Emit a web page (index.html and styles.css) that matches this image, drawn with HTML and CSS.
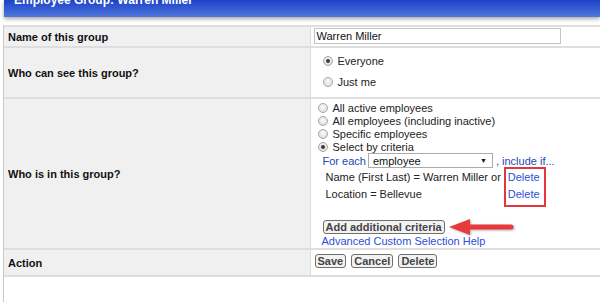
FILE: index.html
```html
<!DOCTYPE html>
<html>
<head>
<meta charset="utf-8">
<link rel="stylesheet" href="styles.css">
</head>
<body>
<div class="page">
  <div class="titlebar"><h1>Employee Group: Warren Miller</h1></div>
  <div class="sheet">
    <table class="form">
      <colgroup><col class="c1"><col class="c2"></colgroup>
      <tr class="r1">
        <th>Name of this group</th>
        <td class="v1"><span class="textbox">Warren Miller</span></td>
      </tr>
      <tr class="r2">
        <th>Who can see this group?</th>
        <td class="v2">
          <div class="opt big"><span class="radio on"></span>Everyone</div>
          <div class="opt big"><span class="radio"></span>Just me</div>
        </td>
      </tr>
      <tr class="r3">
        <th>Who is in this group?</th>
        <td class="v3">
          <div class="opt"><span class="radio"></span>All active employees</div>
          <div class="opt"><span class="radio"></span>All employees (including inactive)</div>
          <div class="opt"><span class="radio"></span>Specific employees</div>
          <div class="opt"><span class="radio on"></span>Select by criteria</div>
          <div class="foreach">
            <span class="blue">For each</span>
            <span class="select"><span>employee</span><span class="caret">&#9660;</span></span>
            <span class="blue">, include if...</span>
          </div>
          <div class="criteria">
            <div class="crit-text">
              <div class="cline">Name (First Last) = Warren Miller or</div>
              <div class="cline">Location = Bellevue</div>
            </div>
            <div class="delbox">
              <a class="link cline">Delete</a>
              <a class="link cline">Delete</a>
            </div>
          </div>
          <div class="addrow">
            <span class="btn">Add additional criteria</span>
            <svg class="arrow" width="70" height="20" viewBox="0 0 70 20">
              <line x1="18" y1="10" x2="64" y2="10" stroke="#e8393d" stroke-width="5" stroke-linecap="round"/>
              <polygon points="2,10 23,2 23,18" fill="#e8393d"/>
            </svg>
          </div>
          <a class="link help">Advanced Custom Selection Help</a>
        </td>
      </tr>
      <tr class="r4">
        <th>Action</th>
        <td class="v4">
          <span class="btn">Save</span>
          <span class="btn">Cancel</span>
          <span class="btn">Delete</span>
        </td>
      </tr>
    </table>
  </div>
</div>
</body>
</html>
```
FILE: styles.css
```css
html, body {
  margin: 0;
  background: #fff;
}
body {
  font-family: "Liberation Sans", Arial, sans-serif;
  font-size: 11px;
  color: #1a1a1a;
}
.titlebar {
  margin-left: 4px;
  height: 17px;
  background: linear-gradient(#1c42c8, #4e76db);
  box-shadow: 0 2px 4px rgba(0, 0, 0, 0.35);
  overflow: hidden;
}
.titlebar h1 {
  margin: -6px 0 0 10px;
  font-size: 12px;
  line-height: 12px;
  font-weight: bold;
  color: #fff;
}
.sheet {
  margin-top: 8px;
  margin-left: 3px;
  border-left: 1px solid #c8c8c8;
  min-height: 290px;
}
table.form {
  border-collapse: collapse;
  table-layout: fixed;
  width: 596px;
}
col.c1 { width: 306px; }
table.form tr {
  border-top: 2px solid #dedede;
  border-bottom: 2px solid #dedede;
}
table.form th {
  background: #f0f0f0;
  text-align: left;
  font-weight: bold;
  color: #111;
  padding: 0 0 0 4px;
  border-right: 1px solid #dcdcdc;
  vertical-align: middle;
}
table.form td {
  padding: 0;
  vertical-align: top;
  background: #fff;
}
.r1 th, .r1 td { height: 18px; }
.r2 th, .r2 td { height: 47px; }
.r3 th, .r3 td { height: 147px; }
.r4 th, .r4 td { height: 21px; }

.v1 { padding: 1px 0 0 3px !important; }
.textbox {
  display: block;
  box-sizing: border-box;
  width: 247px;
  height: 16px;
  border: 1px solid #c4c4c4;
  padding: 0 2px;
  line-height: 14px;
  color: #111;
}

.opt {
  display: flex;
  align-items: center;
  height: 13px;
  color: #222;
}
.opt.big { height: 21px; }
.radio {
  box-sizing: border-box;
  width: 10px;
  height: 10px;
  border-radius: 50%;
  border: 1px solid #a9a9a9;
  background: radial-gradient(circle at 50% 40%, #fbfbfb 0%, #e4e4e4 60%, #cfcfcf 100%);
  margin-right: 5px;
  position: relative;
  flex: none;
}
.radio.on::after {
  content: "";
  position: absolute;
  left: 2px;
  top: 2px;
  width: 4px;
  height: 4px;
  border-radius: 50%;
  background: #3a3a3a;
}
.v2 { padding: 2px 0 0 12px !important; }
.v3 { padding: 2px 0 0 7px !important; }

.foreach {
  display: flex;
  align-items: center;
  height: 15px;
  margin-left: 5px;
}
.blue { color: #2446b4; }
.select {
  box-sizing: border-box;
  display: flex;
  align-items: center;
  justify-content: space-between;
  width: 125px;
  height: 15px;
  margin: 0 3px 0 2px;
  padding: 0 5px 0 4px;
  border: 1px solid #ababab;
  background: #fff;
  color: #111;
}
.caret {
  font-size: 7px;
  color: #111;
}
.criteria {
  display: flex;
  margin-left: 8px;
  margin-top: -1px;
}
.crit-text { padding-top: 2px; color: #222; }
.cline {
  display: block;
  height: 16px;
  line-height: 16px;
}
.crit-text .cline + .cline { margin-top: 1px; }
.delbox {
  border: 2px solid #e2383c;
  margin-left: 3px;
  padding: 0 4px 3px 2px;
}
.delbox .cline + .cline { margin-top: 1px; }
.link {
  color: #2d4fd6;
  text-decoration: none;
}
.addrow {
  display: flex;
  align-items: center;
  margin: 12px 0 0 5px;
  height: 15px;
}
.btn {
  display: inline-block;
  box-sizing: border-box;
  height: 14px;
  line-height: 12px;
  padding: 0 2px;
  border: 1px solid #6f6f6f;
  border-radius: 3px;
  background: #f2f2f2;
  font-weight: bold;
  color: #444;
}
.arrow {
  margin-left: 2px;
  filter: drop-shadow(1px 1px 1px rgba(0, 0, 0, 0.3));
}
.help {
  display: block;
  margin: 1px 0 0 4px;
  line-height: 13px;
  height: 13px;
}
.v4 { padding: 4px 0 0 4px !important; }
.v4 .btn { margin-right: 2px; }
```
